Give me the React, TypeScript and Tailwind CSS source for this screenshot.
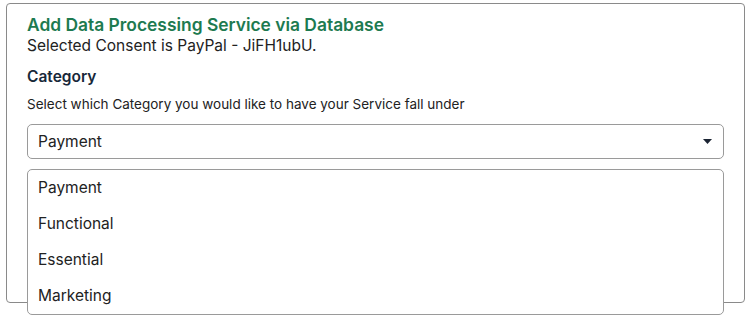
import React from "react";

const options = ["Payment", "Functional", "Essential", "Marketing"];

const App = () => {
  const [value] = React.useState("Payment");

  return (
    <div
      className="w-full min-h-screen bg-white pl-[6px] pt-[3px] pr-[6px]"
      style={{ fontFamily: "Inter, 'Noto Sans', sans-serif" }}
    >
      <div className="w-[739px] h-[300px] border border-[#8a8a8a] rounded-[4px] box-border px-[20px] pt-[10px]">
        <div className="text-[17.4px] leading-[22px] font-semibold text-[#1d7a50]">
          Add Data Processing Service via Database
        </div>
        <div className="text-[15.5px] leading-[20px] text-[#222222]">
          Selected Consent is PayPal - JiFH1ubU.
        </div>
        <div className="text-[15.5px] leading-[20px] font-semibold text-[#17283a] mt-[11px]">
          Category
        </div>
        <div className="text-[13.5px] leading-[18px] text-[#222222] mt-[8px]">
          Select which Category you would like to have your Service fall under
        </div>

        <div className="relative mt-[11px]">
          <div className="h-[35px] w-full border border-[#9a9a9a] rounded-[5px] flex items-center justify-between pl-[10px] pr-[10px] text-[15.5px] text-[#222222]">
            <span>{value}</span>
            <svg width="9" height="5" viewBox="0 0 9 5" className="mr-[1px]">
              <path d="M0 0 L9 0 L4.5 5 Z" fill="#1b2433" />
            </svg>
          </div>

          <div className="absolute left-0 right-0 top-[45px] bg-white border border-[#9a9a9a] rounded-[5px]">
            {options.map((v, i) => (
              <div
                key={i}
                className="h-[36px] flex items-center pl-[10px] text-[15.5px] text-[#222222]"
              >
                {v}
              </div>
            ))}
          </div>
        </div>
      </div>
    </div>
  );
};

export default App;
